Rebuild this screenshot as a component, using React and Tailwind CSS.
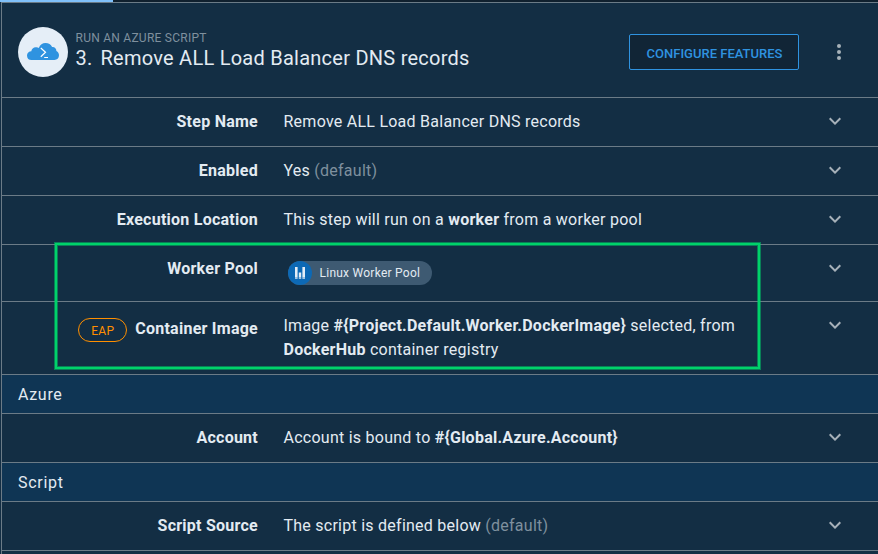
import React from "react";

function Chevron() {
  return (
    <svg viewBox="0 0 24 24" className="h-6 w-6 shrink-0 fill-[#a7b1b9]">
      <path d="M16.59 8.59 12 13.17 7.41 8.59 6 10l6 6 6-6z" />
    </svg>
  );
}

function Row({ label, badge, height, offset = "pt-3", children }) {
  return (
    <div className={`flex shrink-0 items-start border-b border-[#6b7b87] ${height}`}>
      <div className={`flex w-64 shrink-0 justify-end gap-2 ${offset}`}>
        {badge}
        <span className="font-bold">{label}</span>
      </div>
      <div className="ml-[25.5px] w-[480px] shrink-0 pt-3">{children}</div>
      <div className="ml-auto mr-[31px] pt-[11px]">
        <Chevron />
      </div>
    </div>
  );
}

function Section({ title }) {
  return (
    <div className="flex h-[39px] shrink-0 items-center border-b border-[#6b7b87] bg-[#0f3554] pt-0.5 pl-4 tracking-[0.7px]">
      {title}
    </div>
  );
}

function AzureScriptIcon() {
  return (
    <svg viewBox="0 0 50 50" className="h-[50px] w-[50px] shrink-0">
      <circle cx="25" cy="25" r="25" fill="#e5eef7" />
      <path
        d="M13.500 33A4.500 4.700 0 0 1 9 28.500c0-2.500 2-4.100 4.300-4.200.2-2.600 2.500-4.500 5.200-4.100.9.100 1.600.4 2.300.8C22 17.700 24.600 16 27.500 16c3 0 5.500 1.500 6.600 4 2.500-.3 4.400 1.500 4.300 4 1.600.7 2.600 2.300 2.600 4.300 0 2.800-2 4.700-4.500 4.700z"
        fill="#2f93e0"
      />
      <path d="m22.800 21 4.700 4.300-4.700 4.400M26.200 30.500H30" fill="none" stroke="#fff" strokeWidth="1.2" />
    </svg>
  );
}

export default function App() {
  return (
    <div className="relative flex h-[554px] w-[878px] flex-col overflow-hidden bg-[#132e44] font-['Roboto',sans-serif] text-base leading-6 tracking-[0.25px] text-[#e3ebf2]">
      <div className="h-0.5 shrink-0 bg-[#10202e]">
        <div className="h-full w-[113px] bg-[#80c1fb]" />
      </div>
      <div className="ml-px flex grow flex-col border-l border-t border-[#6b7b87]">
        <header className="flex h-[95px] shrink-0 items-center border-b border-[#6b7b87] pt-[3px] pl-4">
          <AzureScriptIcon />
          <div className="ml-[7.5px] pb-1">
            <div className="text-xs leading-4 text-[#7f909e]">RUN AN AZURE SCRIPT</div>
            <h1 className="flex gap-2 text-xl leading-6">
              <span>3.</span>
              <span>Remove ALL Load Balancer DNS records</span>
            </h1>
          </div>
          <button className="ml-auto h-9 w-[170px] rounded-xs border border-[#2f93e0] bg-[#112536] pt-1 pl-px text-[13px] font-medium tracking-normal text-[#2f93e0]">
            CONFIGURE FEATURES
          </button>
          <svg viewBox="0 0 24 24" className="ml-7 mr-[27px] h-6 w-6 fill-[#a7b1b9]">
            <circle cx="12" cy="6" r="2" />
            <circle cx="12" cy="12" r="2" />
            <circle cx="12" cy="18" r="2" />
          </svg>
        </header>
        <Row label="Step Name" height="h-[49px]">Remove ALL Load Balancer DNS records</Row>
        <Row label="Enabled" height="h-[49px]">
          Yes <span className="text-[#7f909e]">(default)</span>
        </Row>
        <Row label="Execution Location" height="h-[49px]">
          This step will run on a <b>worker</b> from a worker pool
        </Row>
        <Row label="Worker Pool" height="h-[57px]">
          <div className="ml-[4.5px] mt-1 flex h-6 w-36 items-center rounded-full bg-[#3e5a72] text-xs">
            <span className="flex h-6 w-6 items-center justify-center rounded-full bg-[#0d69b5]">
              <svg viewBox="0 0 10 12" className="h-3 w-2.5 fill-[#e5eef7]">
                <path d="M0 0h2.600v10.500H0zM3.800 5.500h2.400v5H3.800zM7.400 0H10v10.500H7.400z" />
                <path d="M0 10.500h2.600V12H0zM3.800 10.500h2.400V12H3.800zM7.400 10.500H10V12H7.400z" opacity="0.7" />
              </svg>
            </span>
            <span className="ml-[7.5px]">Linux Worker Pool</span>
          </div>
        </Row>
        <Row
          label="Container Image"
          height="h-[73px]"
          offset="pt-[15px]"
          badge={
            <span className="mt-px flex h-6 w-[49px] items-center justify-center rounded-full border border-[#ff8f00] pt-0.5 text-xs text-[#ff8f00]">
              EAP
            </span>
          }
        >
          Image <b>{"#{Project.Default.Worker.DockerImage}"}</b> selected, from
          <br />
          <b>DockerHub</b> container registry
        </Row>
        <Section title="Azure" />
        <Row label="Account" height="h-[49px]">
          Account is bound to <b>{"#{Global.Azure.Account}"}</b>
        </Row>
        <Section title="Script" />
        <Row label="Script Source" height="h-[49px]">
          The script is defined below <span className="text-[#7f909e]">(default)</span>
        </Row>
      </div>
      <div className="pointer-events-none absolute left-[55px] top-[243px] h-[126px] w-[705px] border-2 border-[#00d26a] shadow-[0_0_0_1px_rgba(0,210,106,0.5),inset_0_0_0_1px_rgba(0,210,106,0.5)]" />
    </div>
  );
}
